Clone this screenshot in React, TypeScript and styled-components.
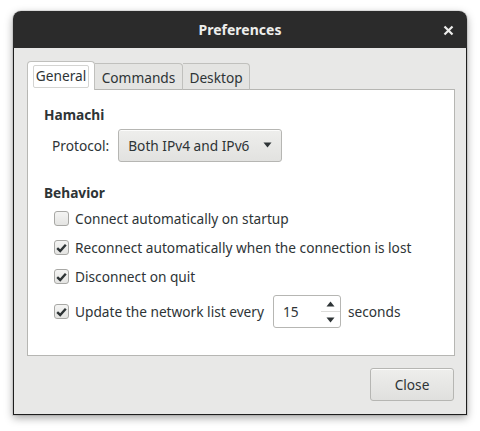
import React from "react";
import styled, { createGlobalStyle } from "styled-components";

const Global = createGlobalStyle`
  html, body { margin: 0; padding: 0; background: #ffffff; }
  body { font-family: "Noto Sans", "DejaVu Sans", sans-serif; color: #2e3436; }
  * { box-sizing: border-box; }
`;

const Page = styled.div`
  padding: 11px 0 0 13px;
  width: 480px;
  height: 431px;
`;

const Window = styled.div`
  width: 454px;
  display: flex;
  flex-direction: column;
  border-radius: 8px 8px 0 0;
  box-shadow: 0 3px 9px rgba(0, 0, 0, 0.35), 0 0 0 1px rgba(0, 0, 0, 0.08);
`;

const TitleBar = styled.div`
  height: 37px;
  background: #2b2b2b;
  border-radius: 8px 8px 0 0;
  display: flex;
  align-items: center;
  justify-content: center;
  position: relative;
  color: #eeeeec;
  font-weight: 700;
  font-size: 14px;
  padding-bottom: 1px;
`;

const CloseX = styled.div`
  position: absolute;
  right: 13px;
  top: 10px;
  width: 11px;
  height: 11px;
`;

const Body = styled.div`
  background: #e8e8e7;
  border: 1px solid #1e1e1e;
  border-top: none;
  padding: 13px 11px 13px 13px;
  display: flex;
  flex-direction: column;
`;

const Tabs = styled.div`
  display: flex;
  align-items: flex-end;
  height: 29px;
  font-size: 13.7px;
`;

const Tab = styled.div<{ $active?: boolean; $first?: boolean; $w: number }>`
  height: ${(p) => (p.$active ? 29 : 27)}px;
  width: ${(p) => p.$w}px;
  border: 1px solid #c0c0bd;
  border-bottom: ${(p) => (p.$active ? "none" : "1px solid #b6b6b3")};
  border-left: ${(p) => (p.$first ? "1px solid #c0c0bd" : "none")};
  border-radius: ${(p) => (p.$active ? "4px 4px 0 0" : "0 4px 0 0")};
  background: ${(p) => (p.$active ? "#ffffff" : "#e4e4e2")};
  display: flex;
  align-items: center;
  justify-content: center;
  padding: ${(p) => (p.$active ? "3px 5px 2px" : "1px 0 0")};
`;

const Focus = styled.div`
  border: 1px solid #d4d4d2;
  border-radius: 2px;
  width: 100%;
  height: 100%;
  display: flex;
  align-items: center;
  justify-content: center;
  padding-bottom: 2px;
`;

const TabFill = styled.div`
  flex: 1;
  height: 1px;
  background: #b6b6b3;
`;

const Panel = styled.div`
  height: 266px;
  background: #ffffff;
  border: 1px solid #b6b6b3;
  border-top: none;
  padding: 14px 16px 0 16px;
  display: flex;
  flex-direction: column;
  font-size: 13.7px;
`;

const Heading = styled.div`
  font-weight: 700;
  height: 22px;
  line-height: 22px;
`;

const ProtoRow = styled.div`
  display: flex;
  align-items: center;
  gap: 9px;
  padding-left: 8px;
  margin-top: 3px;
  height: 33px;
`;

const Combo = styled.div`
  width: 164px;
  height: 33px;
  border: 1px solid #b6b6b3;
  border-radius: 3px;
  background: linear-gradient(#eeeeec, #e2e2e0);
  display: flex;
  align-items: center;
  justify-content: space-between;
  padding: 0 9px 1px 9px;
  box-shadow: inset 0 1px rgba(255, 255, 255, 0.8);
`;

const Section = styled.div`
  margin-top: 20px;
`;

const List = styled.div`
  display: flex;
  flex-direction: column;
  padding-left: 10px;
`;

const Row = styled.div<{ $h: number }>`
  display: flex;
  align-items: center;
  height: ${(p) => p.$h}px;
  gap: 6px;
`;

const Box = styled.div`
  width: 15px;
  height: 15px;
  border: 1px solid #a8a8a5;
  border-radius: 3px;
  background: linear-gradient(#f4f4f3, #e4e4e2);
  display: flex;
  align-items: center;
  justify-content: center;
`;

const Spin = styled.div`
  width: 68px;
  height: 33px;
  border: 1px solid #b6b6b3;
  border-radius: 3px;
  background: #fff;
  display: flex;
  margin-left: 3px;
  margin-right: 1px;
`;

const SpinText = styled.div`
  flex: 1;
  display: flex;
  align-items: center;
  padding-left: 9px;
  padding-bottom: 1px;
`;

const SpinArrows = styled.div`
  width: 19px;
  display: flex;
  flex-direction: column;
`;

const SpinBtn = styled.div<{ $top?: boolean }>`
  flex: 1;
  display: flex;
  align-items: center;
  justify-content: center;
  border-bottom: ${(p) => (p.$top ? "1px solid #dcdcda" : "none")};
`;

const Footer = styled.div`
  display: flex;
  justify-content: flex-end;
  margin-top: 12px;
`;

const Button = styled.div`
  width: 84px;
  height: 33px;
  border: 1px solid #b6b6b3;
  border-radius: 3px;
  background: linear-gradient(#eeeeec, #e0e0de);
  display: flex;
  align-items: center;
  justify-content: center;
  font-size: 13.7px;
  margin-right: 1px;
  box-shadow: inset 0 1px rgba(255, 255, 255, 0.8);
`;

const Check = () => (
  <svg width="11" height="10" viewBox="0 0 11 10">
    <path d="M1.2 5.2 L4.2 8 L9.8 1.8" fill="none" stroke="#2e3436" strokeWidth="2.4" strokeLinejoin="miter" />
  </svg>
);

const Tri = ({ up }: { up?: boolean }) => (
  <svg width="9" height="6" viewBox="0 0 9 6">
    <path d={up ? "M0.5 5.5 L4.5 0.5 L8.5 5.5 Z" : "M0.5 0.5 L4.5 5.5 L8.5 0.5 Z"} fill="#2e3436" />
  </svg>
);

export default function App() {
  return (
    <>
      <Global />
      <Page>
        <Window>
          <TitleBar>
            Preferences
            <CloseX>
              <svg width="11" height="11" viewBox="0 0 11 11">
                <path d="M1.5 1.5 L9.5 9.5 M9.5 1.5 L1.5 9.5" stroke="#eeeeec" strokeWidth="2.2" />
              </svg>
            </CloseX>
          </TitleBar>
          <Body>
            <Tabs>
              <Tab $active $first $w={68}>
                <Focus>General</Focus>
              </Tab>
              <Tab $w={88}>Commands</Tab>
              <Tab $w={67}>Desktop</Tab>
              <TabFill />
            </Tabs>
            <Panel>
              <Heading>Hamachi</Heading>
              <ProtoRow>
                <span>Protocol:</span>
                <Combo>
                  <span>Both IPv4 and IPv6</span>
                  <Tri />
                </Combo>
              </ProtoRow>
              <Section>
                <Heading>Behavior</Heading>
                <List>
                  <Row $h={29}>
                    <Box />
                    <span>Connect automatically on startup</span>
                  </Row>
                  <Row $h={29}>
                    <Box><Check /></Box>
                    <span>Reconnect automatically when the connection is lost</span>
                  </Row>
                  <Row $h={29}>
                    <Box><Check /></Box>
                    <span>Disconnect on quit</span>
                  </Row>
                  <Row $h={41}>
                    <Box><Check /></Box>
                    <span>Update the network list every</span>
                    <Spin>
                      <SpinText>15</SpinText>
                      <SpinArrows>
                        <SpinBtn $top><Tri up /></SpinBtn>
                        <SpinBtn><Tri /></SpinBtn>
                      </SpinArrows>
                    </Spin>
                    <span>seconds</span>
                  </Row>
                </List>
              </Section>
            </Panel>
            <Footer>
              <Button>Close</Button>
            </Footer>
          </Body>
        </Window>
      </Page>
    </>
  );
}
